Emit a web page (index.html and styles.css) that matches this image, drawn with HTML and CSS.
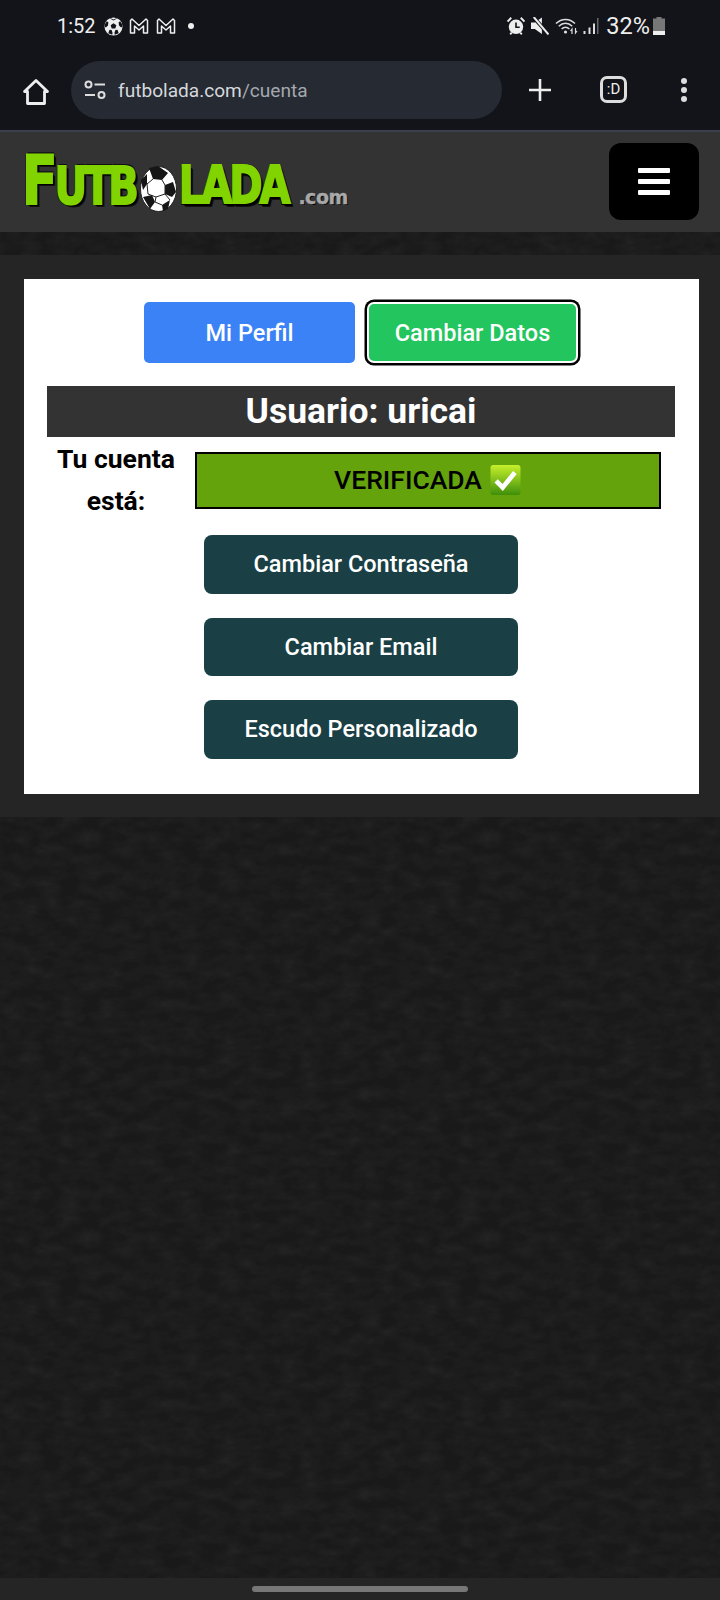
FILE: index.html
```html
<!DOCTYPE html>
<html lang="es">
<head>
<meta charset="utf-8">
<title>Futbolada - Cuenta</title>
<link rel="stylesheet" href="styles.css">
</head>
<body>
<div class="page">
  <div class="chrome">
    <div class="status">
      <div class="status-left">
        <span class="time">1:52</span>
        <svg class="s-ball" viewBox="0 0 20 20"><circle cx="10" cy="10" r="9.500" fill="#eee"/><path d="M10 6.500l3 2.200-1.100 3.400H8.100L7 8.700zM7 1.200L10 2.500l3-1.300.8.5L10 3.800 6.200 1.700zM1.200 7L3 4.500l1.600 1L4.200 9 2 11 .6 10zM18.800 7L17 4.500l-1.600 1 .4 3.500 2.200 2 1.400-1zM4.500 17l1.300-3.500 2.200.3 1 2.700-.3 2.300zM15.500 17l-1.300-3.500-2.200.3-1 2.700.3 2.300z" fill="#12141a"/></svg>
        <svg class="s-m" viewBox="0 0 20 18"><path d="M1.500 16V3.500L3 2l7 6.500L17 2l1.500 1.500V16h-4V9l-4.500 4-4.500-4v7z" fill="none" stroke="#eee" stroke-width="1.500" stroke-linejoin="round"/></svg>
        <svg class="s-m" viewBox="0 0 20 18"><path d="M1.500 16V3.500L3 2l7 6.500L17 2l1.500 1.500V16h-4V9l-4.500 4-4.500-4v7z" fill="none" stroke="#eee" stroke-width="1.500" stroke-linejoin="round"/></svg>
        <span class="s-dot"></span>
      </div>
      <div class="status-right">
        <svg class="s-alarm" viewBox="0.500 1 17 16.500"><circle cx="9" cy="10" r="6.800" fill="#eee"/><path d="M9 6v4.500h3.500" fill="none" stroke="#12141a" stroke-width="1.500"/><path d="M1 5l3.500-3.500M17 5l-3.500-3.500M3.500 17l1.500-1.500M14.500 17L13 15.500" stroke="#eee" stroke-width="1.800"/></svg>
        <svg class="s-mute" viewBox="1 1 16.500 16.500"><path d="M1 6h3.500L11 1.500v15L4.500 12H1z" fill="#eee"/><path d="M2.500 .5l15 16.500" stroke="#12141a" stroke-width="3.500"/><path d="M3.500 1L17 17" stroke="#eee" stroke-width="1.800"/></svg>
        <svg class="s-wifi" viewBox="0 0 23 18"><path d="M1 6.500c5.500-5.500 13.500-5.500 19 0M3.800 9.300c4-4 9.400-4 13.400 0M6.600 12c2.300-2.300 5.500-2.300 7.800 0" fill="none" stroke="#ddd" stroke-width="1.500"/><circle cx="10.500" cy="15" r="1.600" fill="#ddd"/><path d="M17 17v-5l-1.500 2M20.500 11v5l1.500-2" fill="none" stroke="#ddd" stroke-width="1.200"/></svg>
        <svg class="s-signal" viewBox="0 0 16 17"><path d="M1 13h2v3H1zM6 9.500h2V16H6z" fill="#ddd"/><path d="M10.500 5.500h2V16h-2z" fill="#ddd"/><path d="M14.500 0h1.500v16h-1.500z" fill="#666"/></svg>
        <span class="pct">32%</span>
        <svg class="s-batt" viewBox="0 0 12 18"><path d="M3.500 0h5v1.500H12V18H0V1.500h3.500z" fill="#777"/><path d="M0 14h12v4H0z" fill="#eee"/></svg>
      </div>
    </div>
    <div class="toolbar">
      <svg class="t-home" viewBox="0 0 28 28"><path d="M2.500 13.500L14 2.500l11.500 11H22.500V25.500H5.500V13.500z" fill="none" stroke="#eee" stroke-width="2.800" stroke-linejoin="round"/></svg>
      <div class="omnibox">
        <svg class="t-tune" viewBox="0 0 22 20"><circle cx="4.500" cy="4.500" r="3" fill="none" stroke="#ddd" stroke-width="2"/><path d="M10.500 4.500H21M1 15h10" stroke="#ddd" stroke-width="2"/><circle cx="17.500" cy="15" r="3" fill="none" stroke="#ddd" stroke-width="2"/></svg>
        <span class="url">futbolada.com<span class="url-path">/cuenta</span></span>
      </div>
      <svg class="t-plus" viewBox="0 0 22 22"><path d="M11 0v22M0 11h22" stroke="#eee" stroke-width="2.600"/></svg>
      <div class="t-tab">:D</div>
      <svg class="t-dots" viewBox="0 0 8 24"><circle cx="4" cy="3" r="3" fill="#ddd"/><circle cx="4" cy="12" r="3" fill="#ddd"/><circle cx="4" cy="21" r="3" fill="#ddd"/></svg>
    </div>
  </div>

  <header class="site-header">
    <div class="logo">
      <span class="logo-word logo-futb"><span class="logo-big">F</span>UTB</span>
      <svg class="logo-ball" viewBox="0 0 37 46"><ellipse cx="18.500" cy="23" rx="18" ry="22.500" fill="#fff" stroke="#222" stroke-width="1"/><path d="M9 2l9-2 10 7-6 7-9-1zM25 19l8-3 3 10-4 5-7-3zM1 14l6-6v10l-4 6zM3 31l9-2 3 7-5 7zM22 39l8-5-2 9-5 2z" fill="#161616"/><path d="M13 13l-6 5 1 10 8 3 9-3v-9l-3-5M16 31l-1 5M25 28l5 6M15 36l7 3" fill="none" stroke="#222" stroke-width="1"/></svg>
      <span class="logo-word logo-lada">LADA</span>
      <span class="logo-tld">.com</span>
    </div>
    <button class="menu-btn" type="button" aria-label="Menu">
      <span class="bar"></span><span class="bar"></span><span class="bar"></span>
    </button>
  </header>

  <main class="panel">
    <section class="card">
      <div class="tabs">
        <a class="tab tab-blue">Mi Perfil</a>
        <a class="tab tab-green">Cambiar Datos</a>
      </div>
      <h1 class="user-title">Usuario: uricai</h1>
      <div class="state-row">
        <div class="state-label">Tu cuenta está:</div>
        <div class="state-value">VERIFICADA
          <svg class="check" viewBox="0 0 32 32"><defs><linearGradient id="chk" x1="0" y1="0" x2="0" y2="1"><stop offset="0" stop-color="#c6f02c"/><stop offset="1" stop-color="#3f8f0a"/></linearGradient></defs><rect width="32" height="32" rx="3" fill="url(#chk)"/><path d="M6 17l7 7L26 8" fill="none" stroke="#fff" stroke-width="5"/></svg>
        </div>
      </div>
      <div class="actions">
        <a class="action">Cambiar Contraseña</a>
        <a class="action">Cambiar Email</a>
        <a class="action">Escudo Personalizado</a>
      </div>
    </section>
  </main>

  <div class="filler"></div>
  <div class="navbar"><span class="pill"></span></div>
</div>
</body>
</html>
```

FILE: styles.css
```css
* { box-sizing: border-box; }
html, body { margin: 0; padding: 0; }
body {
  font-family: Roboto, "Liberation Sans", sans-serif;
  background-color: #191919;
  background-image: url("data:image/svg+xml,%3Csvg xmlns='http://www.w3.org/2000/svg' width='400' height='400'%3E%3Cfilter id='n' x='0' y='0' width='100%25' height='100%25'%3E%3CfeTurbulence type='fractalNoise' baseFrequency='.05 .09' numOctaves='4' seed='4' stitchTiles='stitch'/%3E%3CfeColorMatrix values='0 0 0 0 .5 0 0 0 0 .5 0 0 0 0 .5 .55 0 0 0 -.2'/%3E%3C/filter%3E%3Crect width='400' height='400' filter='url(%23n)' opacity='.2'/%3E%3C/svg%3E");
}
.page { width: 720px; height: 1600px; display: flex; flex-direction: column; overflow: hidden; }

/* browser chrome */
.chrome { height: 130px; background: #12141a; color: #eee; flex: none; }
.status { height: 52px; display: flex; justify-content: space-between; align-items: center; padding: 0 55px 0 57px; }
.status-left, .status-right { display: flex; align-items: center; }
.time { font-size: 20px; width: 47px; }
.s-ball { width: 19px; height: 19px; margin-right: 6px; }
.s-m { width: 20px; height: 18px; margin-right: 7px; }
.s-dot { width: 6px; height: 6px; border-radius: 50%; background: #eee; margin-left: 5px; }
.s-alarm { width: 18px; height: 18px; margin-right: 6px; }
.s-mute { width: 18px; height: 18px; margin-right: 6px; }
.s-wifi { width: 23px; height: 18px; margin-right: 4px; }
.s-signal { width: 17px; height: 17px; margin-right: 7px; }
.pct { font-size: 23.500px; margin-right: 3px; }
.s-batt { width: 12px; height: 18px; }
.toolbar { height: 78px; display: flex; align-items: flex-start; padding-top: 9px; }
.t-home { width: 28px; height: 28px; margin: 17px 21px 0 22px; flex: none; }
.omnibox { width: 431px; height: 58px; border-radius: 29px; background: #252a33; display: flex; align-items: center; padding-left: 13px; flex: none; }
.t-tune { width: 22px; height: 20px; margin-right: 12px; }
.url { font-size: 19.100px; color: #d6d8dc; }
.url-path { color: #a4a8ae; }
.t-plus { width: 22px; height: 22px; margin: 18px 0 0 27px; flex: none; }
.t-tab { width: 27px; height: 27px; margin: 15px 0 0 49px; border: 3px solid #ddd; border-radius: 7px; font-size: 15px; line-height: 20px; text-align: center; flex: none; }
.t-dots { width: 8px; height: 24px; margin: 17px 0 0 53px; flex: none; }

/* site header */
.site-header { height: 102px; flex: none; background: #333; border-top: 2px solid #3c3f4c; display: flex; justify-content: space-between; align-items: flex-start; padding: 11px 21px 0 22px; }
.logo { display: flex; align-items: flex-end; margin-top: 12px; height: 58px; }
.logo-word { font-family: "DejaVu Sans", sans-serif; font-weight: 700; font-size: 40px; line-height: 46px; color: #82d400; letter-spacing: -3px; -webkit-text-stroke: 1.500px #82d400; text-shadow: 2px 2px 0 #000, -1px 1px 0 #000, 1px -1px 0 #111, 3px 3px 0 #111; display: block; transform: scaleY(1.3); transform-origin: 50% 85%; }
.logo-big { font-size: 52px; line-height: 46px; }
.logo-ball { width: 37px; height: 46px; flex: none; margin-bottom: 1px; }
.logo-futb { margin-right: 4px; }
.logo-lada { margin-left: 2px; }
.logo-tld { font-family: "DejaVu Sans", sans-serif; font-weight: 700; font-size: 19px; line-height: 24px; color: #a8a8a8; -webkit-text-stroke: .4px #a8a8a8; text-shadow: 1px 1px 0 #000; margin: 0 0 4px 11px; letter-spacing: -.5px; }
.menu-btn { width: 90px; height: 77px; background: #000; border: 0; border-radius: 12px; display: flex; flex-direction: column; align-items: center; justify-content: center; gap: 6px; padding: 0; }
.bar { display: block; width: 32px; height: 5px; background: #fff; border-radius: 1px; }

/* panel */
.panel { margin-top: 23px; background: #252525; padding: 24px 21px 23px 24px; flex: none; }
.card { background: #fff; height: 515px; padding: 23px 24px 0 23px; }
.tabs { display: flex; justify-content: center; gap: 12px; }
.tab { width: 211px; height: 61px; border-radius: 5px; color: #fff; font-size: 23.500px; font-weight: 500; display: flex; align-items: center; justify-content: center; }
.tab-blue { background: #3b82f6; }
.tab-green { background: #22c55e; border: 2px solid #fff; box-shadow: 0 0 0 2.500px #000; border-radius: 7px; }
.user-title { margin: 23px 0 0; height: 51px; background: #333; color: #fff; font-size: 35.500px; font-weight: 700; line-height: 51px; text-align: center; }
.state-row { display: flex; margin-top: 15px; padding: 0 14px 0 0; align-items: flex-start; }
.state-label { width: 138px; margin-right: 10px; font-size: 26.500px; font-weight: 700; line-height: 42px; text-align: center; color: #000; flex: none; margin-top: -14px; margin-bottom: 1px; }
.state-value { flex: 1; height: 57px; background: #65a30d; border: 2px solid #000; color: #000; font-size: 26.500px; font-weight: 500; display: flex; align-items: center; justify-content: center; gap: 7px; padding-bottom: 2px; }
.check { width: 33px; height: 30px; }
.actions { display: flex; flex-direction: column; align-items: center; gap: 24px; margin-top: 12px; }
.action { width: 314px; height: 58.500px; border-radius: 8px; background: #1a4045; color: #fff; font-size: 23.500px; font-weight: 500; display: flex; align-items: center; justify-content: center; }

.filler { flex: 1; }
.navbar { height: 22px; flex: none; background: #252525; display: flex; justify-content: center; padding-top: 8px; }
.pill { width: 216px; height: 6px; border-radius: 3px; background: #777; }
```
